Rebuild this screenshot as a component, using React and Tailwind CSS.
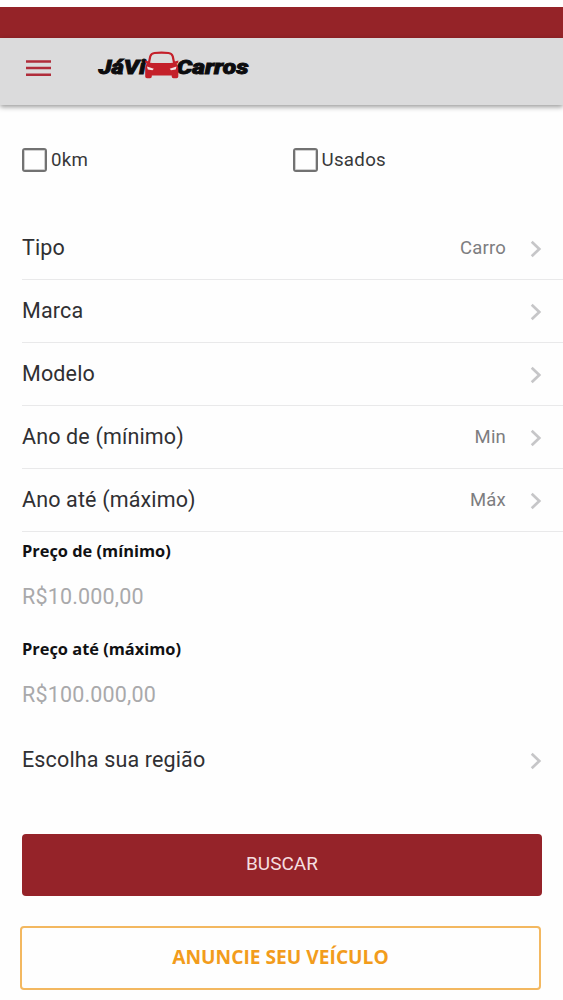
import React from "react";

const filters = [
  { id: "tipo", label: "Tipo", value: "Carro" },
  { id: "marca", label: "Marca", value: "" },
  { id: "modelo", label: "Modelo", value: "" },
  { id: "anoMin", label: "Ano de (mínimo)", value: "Min" },
  { id: "anoMax", label: "Ano até (máximo)", value: "Máx" },
];

function Chevron() {
  return (
    <svg width="12" height="18" viewBox="0 0 12 18" fill="none" className="relative top-px shrink-0">
      <path d="M1.700 1.800L9.300 9L1.700 16.200" stroke="#c6c6c8" strokeWidth="2.700" />
    </svg>
  );
}

function MenuIcon() {
  return (
    <svg width="25" height="18" viewBox="0 0 25 18">
      <path d="M0 2.500H25M0 9H25M0 15.700H25" stroke="#b02c3a" strokeWidth="2.500" />
    </svg>
  );
}

function Logo() {
  return (
    <svg width="156" height="32" viewBox="96 48 156 32" aria-label="JáVi Carros">
      <g
        fill="#0c0c0e"
        stroke="#0c0c0e"
        strokeWidth="0.9"
        fontFamily="Roboto, sans-serif"
        fontWeight="900"
        fontStyle="italic"
        fontSize="20"
      >
        <text x="98.500" y="73.500" textLength="47" lengthAdjust="spacingAndGlyphs">JáVi</text>
        <text x="176.500" y="73.500" textLength="72" lengthAdjust="spacingAndGlyphs">Carros</text>
      </g>
      {/* carro */}
      <path
        d="M148.700 64L150.200 56.500Q151.200 53.400 154.500 53Q161.500 52.200 168.500 53Q171.800 53.400 172.800 56.500L174.300 64Z"
        fill="#dcdddd"
        stroke="#c4202a"
        strokeWidth="2.200"
      />
      <path
        d="M148 62.500Q161.500 64.500 175 62.500Q178.300 64.500 178.300 68.500V76.500Q178.300 78.300 176.500 78.300H173.500Q171.700 78.300 171.700 76.500V75.500H151.800V76.500Q151.800 78.300 150 78.300H147Q145.200 78.300 145.200 76.500V68.500Q145.200 64.500 148 62.500Z"
        fill="#c4202a"
      />
      <path d="M145 60.500L149 61.500L148 64.500L145.500 63Z" fill="#c4202a" />
      <path d="M178.500 60.500L174.500 61.500L175.500 64.500L178 63Z" fill="#c4202a" />
      <path d="M147 66.500L153.800 68.800L152.500 70.200L147.800 69.500Z" fill="#f3e6e6" />
      <path d="M176.500 66.500L169.700 68.800L171 70.200L175.700 69.500Z" fill="#f3e6e6" />
    </svg>
  );
}

function CheckOption({ label }) {
  return (
    <label className="flex w-[271px] items-center">
      <span className="h-6 w-[25px] rounded-[3px] border-2 border-[#727272] shadow-[inset_0_0_0_1px_#d0d0d0]"></span>
      <span className="ml-1 text-[18.700px] leading-6 tracking-[0.300px] text-[#38383a]">{label}</span>
    </label>
  );
}

function FilterRow({ label, value }) {
  return (
    <div className="flex h-[63px] items-center border-b border-[#e9e9ea] pr-[21px]">
      <span className="text-[21.500px] tracking-[0.150px] text-[#303033]">{label}</span>
      <span className="relative top-px ml-auto mr-6 text-[18.500px] tracking-[0.200px] text-[#7d7d80]">{value}</span>
      <Chevron />
    </div>
  );
}

function PriceField({ label, placeholder }) {
  return (
    <div className="h-[98px] pt-[7px]">
      <p className="font-['Open_Sans',sans-serif] text-[16.400px] font-bold leading-6 text-[#111113]">{label}</p>
      <p className="mt-5 text-[21.500px] leading-7 tracking-[0.170px] text-[#a9a9ab]">{placeholder}</p>
    </div>
  );
}

export default function App() {
  return (
    <div className="h-[1000px] overflow-hidden bg-[#fefefe] pt-[7px] font-[Roboto,sans-serif]">
      <div className="h-[31px] bg-[#952328]"></div>
      <header className="flex h-[67px] items-start bg-[#dbdbdc] pl-[26px] shadow-[0_2px_5px_rgba(0,0,0,0.4)]">
        <button className="mt-[21px]">
          <MenuIcon />
        </button>
        <div className="ml-[45px] mt-[10px]">
          <Logo />
        </div>
      </header>

      <main className="pl-[22px]">
        <div className="flex pt-[43px]">
          <CheckOption label="0km" />
          <CheckOption label="Usados" />
        </div>

        <div className="mt-[45px]">
          {filters.map((item) => (
            <FilterRow key={item.id} label={item.label} value={item.value} />
          ))}
        </div>

        <PriceField label="Preço de (mínimo)" placeholder="R$10.000,00" />
        <PriceField label="Preço até (máximo)" placeholder="R$100.000,00" />

        <div className="flex h-[63px] items-center pr-[21px]">
          <span className="relative top-px text-[21.500px] tracking-[0.150px] text-[#303033]">Escolha sua região</span>
          <span className="ml-auto">
            <Chevron />
          </span>
        </div>

        <button className="mt-[43px] block h-[62px] w-[520px] rounded bg-[#952329] pb-[2px] text-[19px] text-[#f6dfe0]">
          BUSCAR
        </button>
        <button className="-ml-[2px] mt-[30px] block h-[64px] w-[521px] rounded border-2 border-[#f3b860] pb-px font-['Open_Sans',sans-serif] text-[19.200px] font-bold text-[#f29c1c]">
          ANUNCIE SEU VEÍCULO
        </button>
      </main>
    </div>
  );
}
